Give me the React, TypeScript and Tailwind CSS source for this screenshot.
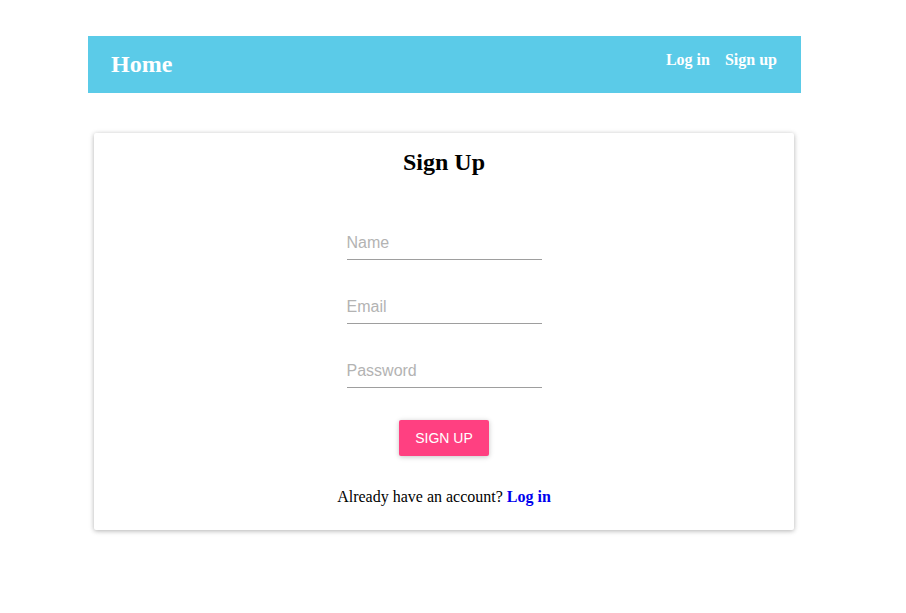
import React from "react";

function Field({ placeholder, type = "text" }: { placeholder: string; type?: string }) {
  return (
    <div className="w-[195px] pt-[19px] pb-[4px] border-b border-[#9e9e9e]">
      <input
        type={type}
        placeholder={placeholder}
        className="block w-full h-[24px] text-[16px] leading-[24px] outline-none bg-transparent placeholder:text-[#b3b3b3] text-black"
        style={{ fontFamily: '"Liberation Sans", Arial, sans-serif' }}
      />
    </div>
  );
}

export default function App() {
  const serif = { fontFamily: '"Liberation Serif", "Times New Roman", serif' };
  return (
    <div className="w-[906px] h-[613px] bg-white" style={serif}>
      <div className="pt-[36px] pl-[88px]">
        <nav className="w-[713px] h-[57px] bg-[#5bcbe8] flex items-start justify-between pl-[23px] pr-[24px] pt-[14px] text-white">
          <div className="text-[24px] leading-[28px] font-bold">Home</div>
          <div className="flex gap-[15px] mt-[1px] text-[16px] leading-[18px] font-bold">
            <a>Log in</a>
            <a>Sign up</a>
          </div>
        </nav>
      </div>
      <div className="pt-[40px] pl-[94px]">
        <div className="w-[700px] h-[397px] bg-white rounded-[2px] shadow-[0_1px_6px_rgba(0,0,0,0.12),0_1px_4px_rgba(0,0,0,0.2)] flex flex-col items-center pt-[15px]">
          <h2 className="text-[24px] leading-[28px] font-bold text-black">Sign Up</h2>
          <div className="mt-[36px] flex flex-col gap-[16px]">
            <Field placeholder="Name" />
            <Field placeholder="Email" />
            <Field placeholder="Password" type="password" />
          </div>
          <button
            className="mt-[32px] w-[90px] h-[36px] bg-[#ff4081] text-white text-[14px] rounded-[2px] shadow-[0_1px_6px_rgba(0,0,0,0.12),0_1px_4px_rgba(0,0,0,0.12)]"
            style={{ fontFamily: '"Liberation Sans", Arial, sans-serif' }}
          >
            SIGN UP
          </button>
          <p className="mt-[31px] text-[16px] leading-[19px] text-black">
            Already have an account? <a className="font-bold text-[#0000ee]">Log in</a>
          </p>
        </div>
      </div>
    </div>
  );
}
